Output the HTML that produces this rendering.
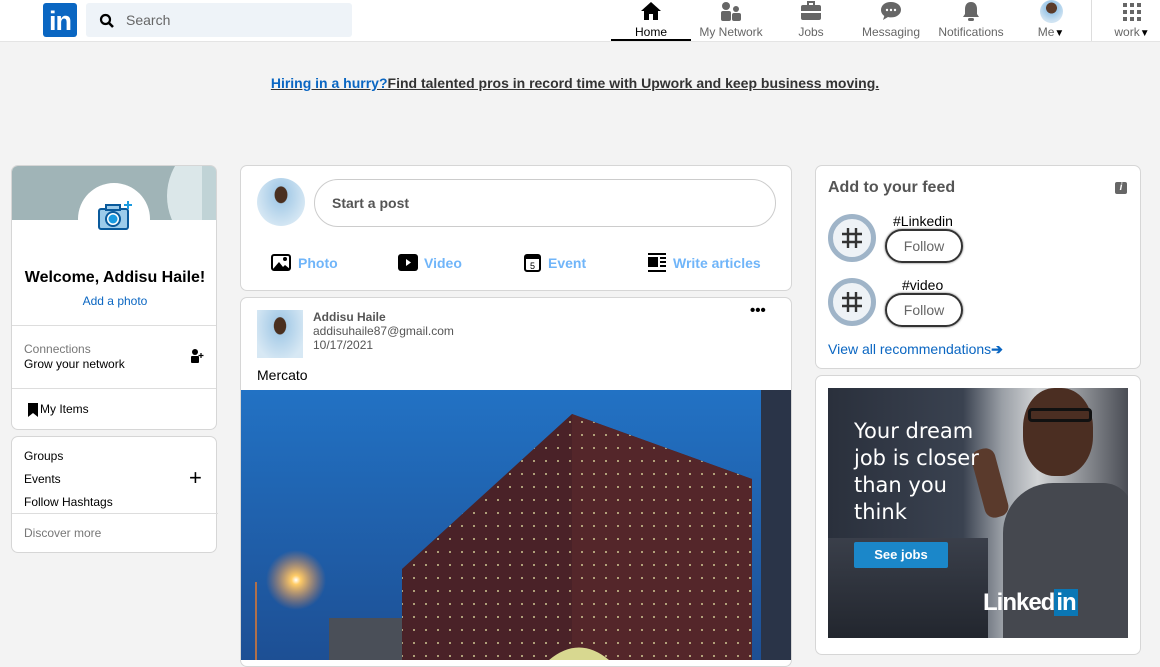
<!DOCTYPE html>
<html><head><meta charset="utf-8"><style>
*{box-sizing:border-box;margin:0;padding:0}
body{width:1160px;height:657px;overflow:hidden;background:#f3f3f3;font-family:"Liberation Sans",Arial,sans-serif;position:relative;color:#000}
.a{position:absolute}
.hdr{left:0;top:0;width:1160px;height:42px;background:#fff;border-bottom:1px solid #e4e4e4}
.nav{top:0;text-align:center;font-size:12px;color:#666;width:80px}
.nav svg{display:block;margin:1px auto 0}
.card{background:#fff;border:1px solid #d6d6d6;border-radius:7px}
.lnk{color:#0a66c2}
.act{font-size:14px;font-weight:bold;color:#70b5f9}
.follow{width:78px;height:34px;border:2px solid #333;border-radius:17px;font-size:14px;color:#666;text-align:center;line-height:30px;box-shadow:0 0 2px #666}
.hash{width:48px;height:48px;border-radius:50%;background:#eef2f6;border:5px solid #9fb4c8}
</style></head><body>
<div class="a hdr"></div>
<div class="a" style="left:43px;top:3px;width:34px;height:34px;background:#0a66c2;border-radius:3px;color:#fff;font-weight:bold;font-size:27px;line-height:36px;text-align:center;letter-spacing:-1px">in</div>
<div class="a" style="left:86px;top:3px;width:266px;height:34px;background:#eef3f8;border-radius:3px"></div>
<svg class="a" style="left:99px;top:13px" width="16" height="16" viewBox="0 0 16 16"><circle cx="6.5" cy="6.5" r="4.5" fill="none" stroke="#000" stroke-width="2.2"/><path d="M10 10l4 4" stroke="#000" stroke-width="2.6"/></svg>
<div class="a" style="left:126px;top:12px;font-size:14px;color:#666">Search</div>

<div class="a nav" style="left:611px;width:80px;color:#000"><svg width="22" height="20" viewBox="0 0 22 20"><path d="M11 1L1 10h3v9h5v-6h4v6h5v-9h3z" fill="#000"/></svg><div style="margin-top:4px">Home</div></div>
<div class="a" style="left:611px;top:39px;width:80px;height:2px;background:#000"></div>
<div class="a nav" style="left:691px"><svg width="22" height="20" viewBox="0 0 22 20"><circle cx="6" cy="5" r="4" fill="#666"/><rect x="1" y="10" width="10" height="10" rx="2" fill="#666"/><circle cx="16" cy="8" r="3" fill="#666"/><rect x="12" y="12" width="9" height="8" rx="2" fill="#666"/></svg><div style="margin-top:4px">My Network</div></div>
<div class="a nav" style="left:771px"><svg width="22" height="20" viewBox="0 0 22 20"><rect x="8" y="1" width="6" height="4" fill="none" stroke="#666" stroke-width="2"/><rect x="1" y="4" width="20" height="15" rx="2" fill="#666"/><rect x="1" y="10" width="20" height="2" fill="#fff"/></svg><div style="margin-top:4px">Jobs</div></div>
<div class="a nav" style="left:851px"><svg width="22" height="20" viewBox="0 0 22 20"><path d="M11 1C5 1 1 4.5 1 9c0 2.5 1.3 4.5 3.3 6L3 19l5-3c1 .3 2 .4 3 .4 6 0 10-3.5 10-7.7S17 1 11 1z" fill="#666"/><circle cx="7" cy="9" r="1.2" fill="#fff"/><circle cx="11" cy="9" r="1.2" fill="#fff"/><circle cx="15" cy="9" r="1.2" fill="#fff"/></svg><div style="margin-top:4px">Messaging</div></div>
<div class="a nav" style="left:931px"><svg width="22" height="20" viewBox="0 0 22 20"><path d="M11 1c-4 0-6 3-6 7v5l-2 3h16l-2-3V8c0-4-2-7-6-7z" fill="#666"/><rect x="8" y="17" width="6" height="3" rx="1.5" fill="#666"/></svg><div style="margin-top:4px">Notifications</div></div>
<div class="a" style="left:1040px;top:0;width:23px;height:23px;border-radius:50%;background:radial-gradient(circle at 50% 35%,#5a3b2a 0 28%,#9cc7e8 30%,#cfe3f2 70%)"></div>
<div class="a nav" style="left:1011px;top:25px;width:80px">Me<span style="font-size:10px;color:#000">▼</span></div>
<div class="a" style="left:1091px;top:0;width:1px;height:41px;background:#ddd"></div>
<svg class="a" style="left:1122px;top:2px" width="20" height="20" viewBox="0 0 20 20" fill="#666"><rect x="1" y="1" width="4" height="4"/><rect x="8" y="1" width="4" height="4"/><rect x="15" y="1" width="4" height="4"/><rect x="1" y="8" width="4" height="4"/><rect x="8" y="8" width="4" height="4"/><rect x="15" y="8" width="4" height="4"/><rect x="1" y="15" width="4" height="4"/><rect x="8" y="15" width="4" height="4"/><rect x="15" y="15" width="4" height="4"/></svg>
<div class="a nav" style="left:1102px;top:25px;width:60px">work<span style="font-size:10px;color:#000">▼</span></div>

<div class="a" style="left:-5px;top:75px;width:1160px;text-align:center;font-size:14px;font-weight:bold;text-decoration:underline;color:#333"><span class="lnk">Hiring in a hurry?</span>Find talented pros in record time with Upwork and keep business moving.</div>

<!-- left -->
<div class="a card" style="left:11px;top:165px;width:206px;height:265px;overflow:hidden">
<div style="height:54px;background:#a0b4b7;position:relative;overflow:hidden"><div class="a" style="left:155px;top:-30px;width:120px;height:120px;border-radius:50%;background:#dbe7e9"></div><div class="a" style="left:190px;top:0;width:20px;height:60px;background:#c0d3d6"></div></div>
<div style="position:absolute;left:66px;top:17px;width:72px;height:72px;border-radius:50%;background:#fff"></div>
<svg class="a" style="left:85px;top:34px" width="36" height="32" viewBox="0 0 36 32"><rect x="2" y="9" width="29" height="20" rx="2" fill="#9ccbea" stroke="#0a5a9c" stroke-width="2"/><rect x="9" y="5" width="14" height="5" fill="#9ccbea" stroke="#0a5a9c" stroke-width="2"/><circle cx="16" cy="19" r="7" fill="#fff" stroke="#0a5a9c" stroke-width="2"/><circle cx="16" cy="19" r="4.5" fill="#1a9ae0"/><path d="M31 1v8M27 5h8" stroke="#1a9ae0" stroke-width="2"/></svg>
<div class="a" style="left:0;top:103px;width:206px;text-align:center;font-size:16px;font-weight:bold">Welcome, Addisu Haile!</div>
<div class="a lnk" style="left:0;top:128px;width:206px;text-align:center;font-size:12px">Add a photo</div>
<div class="a" style="left:0;top:159px;width:206px;height:1px;background:#ddd"></div>
<div class="a" style="left:12px;top:176px;font-size:12px;color:#777">Connections</div>
<div class="a" style="left:12px;top:191px;font-size:12px">Grow your network</div>
<svg class="a" style="left:178px;top:183px" width="14" height="14" viewBox="0 0 14 14"><circle cx="5" cy="3" r="3"/><rect x="1" y="7" width="8" height="7" rx="1"/><path d="M11 4v5M8.5 6.5h5" stroke="#000" stroke-width="1.2"/></svg>
<div class="a" style="left:0;top:222px;width:206px;height:1px;background:#ddd"></div>
<svg class="a" style="left:16px;top:237px" width="10" height="14" viewBox="0 0 10 14"><path d="M0 0h10v14L5 10 0 14z"/></svg>
<div class="a" style="left:28px;top:236px;font-size:12px">My Items</div>
</div>
<div class="a card" style="left:11px;top:436px;width:206px;height:117px">
<div class="a" style="left:12px;top:12px;font-size:12px">Groups</div>
<div class="a" style="left:12px;top:35px;font-size:12px">Events</div>
<div class="a" style="left:177px;top:30px;font-size:22px;line-height:22px">+</div>
<div class="a" style="left:12px;top:58px;font-size:12px">Follow Hashtags</div>
<div class="a" style="left:0;top:76px;width:206px;height:1px;background:#ddd"></div>
<div class="a" style="left:12px;top:89px;font-size:12px;color:#777">Discover more</div>
</div>

<!-- center -->
<div class="a card" style="left:240px;top:165px;width:552px;height:126px">
<div class="a" style="left:16px;top:12px;width:48px;height:48px;border-radius:50%;background:radial-gradient(ellipse at 50% 35%,#4a3020 0 18%,#a9cde8 20%,#d7e8f4 75%)"></div>
<div class="a" style="left:73px;top:13px;width:462px;height:48px;border:1px solid #ccc;border-radius:24px;font-size:14px;font-weight:bold;color:#555;padding:15px 0 0 17px">Start a post</div>
<svg class="a" style="left:30px;top:88px" width="20" height="17" viewBox="0 0 20 17"><rect x="1" y="1" width="18" height="15" rx="2" fill="#fff" stroke="#000" stroke-width="2"/><path d="M2 15l6-7 4 5 2-2 5 4z"/><circle cx="14" cy="5" r="2"/></svg>
<div class="a act" style="left:57px;top:89px">Photo</div>
<svg class="a" style="left:157px;top:88px" width="20" height="17"><rect x="0" y="0" width="20" height="17" rx="3"/><path d="M8 5v7l5-3.5z" fill="#fff"/></svg>
<div class="a act" style="left:183px;top:89px">Video</div>
<svg class="a" style="left:283px;top:87px" width="17" height="19" viewBox="0 0 17 19"><rect x="1" y="2" width="15" height="16" rx="2" fill="#fff" stroke="#000" stroke-width="2"/><rect x="1" y="2" width="15" height="4"/><text x="8.5" y="16" font-size="9" text-anchor="middle" font-family="Liberation Sans">5</text></svg>
<div class="a act" style="left:307px;top:89px">Event</div>
<svg class="a" style="left:407px;top:87px" width="18" height="19" viewBox="0 0 18 19"><rect x="0" y="0" width="18" height="2"/><rect x="0" y="4" width="10" height="10"/><rect x="12" y="4" width="6" height="2"/><rect x="12" y="8" width="6" height="2"/><rect x="12" y="12" width="6" height="2"/><rect x="0" y="17" width="18" height="2"/></svg>
<div class="a act" style="left:432px;top:89px">Write articles</div>
</div>

<div class="a card" style="left:240px;top:297px;width:552px;height:370px;overflow:hidden">
<div class="a" style="left:16px;top:12px;width:46px;height:48px;background:radial-gradient(ellipse at 50% 33%,#4a3020 0 18%,#a9cde8 20%,#d7e8f4 80%)"></div>
<div class="a" style="left:72px;top:12px;font-size:12px;font-weight:bold;color:#555">Addisu Haile</div>
<div class="a" style="left:72px;top:26px;font-size:12px;color:#555">addisuhaile87@gmail.com</div>
<div class="a" style="left:72px;top:40px;font-size:12px;color:#555">10/17/2021</div>
<div class="a" style="left:509px;top:4px;font-size:15px;font-weight:bold;letter-spacing:0">•••</div>
<div class="a" style="left:16px;top:69px;font-size:14px">Mercato</div>
<svg class="a" style="left:0;top:92px" width="552" height="270" viewBox="0 0 552 270">
<defs><linearGradient id="sk" x1="0" y1="0" x2="0" y2="1"><stop offset="0" stop-color="#2272c4"/><stop offset="1" stop-color="#1d4f94"/></linearGradient><radialGradient id="gl"><stop offset="0" stop-color="#fff"/><stop offset=".15" stop-color="#ffcc66"/><stop offset="1" stop-color="#ff8844" stop-opacity="0"/></radialGradient><pattern id="dots" width="12" height="13" patternUnits="userSpaceOnUse"><rect x="4" y="5" width="2" height="2" fill="#d9d59a" opacity=".7"/></pattern></defs>
<rect width="552" height="270" fill="url(#sk)"/>
<polygon points="161,179 331,24 511,89 511,270 161,270" fill="#4a2228"/>
<polygon points="331,24 511,89 511,270 331,270" fill="#54262a"/>
<polygon points="161,179 331,24 511,89 511,270 161,270" fill="url(#dots)"/>
<rect x="520" y="0" width="32" height="270" fill="#2a3448"/>
<rect x="88" y="228" width="73" height="42" fill="#4a4f58"/>
<circle cx="55" cy="190" r="30" fill="url(#gl)"/>
<rect x="14" y="192" width="2" height="78" fill="#b0704a"/>
<path d="M308 270q30-25 60 0z" fill="#d8d890"/>
</svg>
</div>

<!-- right -->
<div class="a card" style="left:815px;top:165px;width:326px;height:204px">
<div class="a" style="left:12px;top:13px;font-size:16px;font-weight:bold;color:#555">Add to your feed</div>
<div class="a" style="left:299px;top:16px;width:12px;height:12px;background:#666;border-radius:2px;color:#fff;font-size:10px;font-weight:bold;font-style:italic;text-align:center;line-height:12px">i</div>
<div class="a hash" style="left:12px;top:48px"><svg width="38" height="38" viewBox="0 0 38 38"><path d="M15 9v20M23 9v20M9 15h20M9 23h20" stroke="#333" stroke-width="2.4"/></svg></div>
<div class="a" style="left:77px;top:47px;font-size:14px">#Linkedin</div>
<div class="a follow" style="left:69px;top:63px">Follow</div>
<div class="a hash" style="left:12px;top:112px"><svg width="38" height="38" viewBox="0 0 38 38"><path d="M15 9v20M23 9v20M9 15h20M9 23h20" stroke="#333" stroke-width="2.4"/></svg></div>
<div class="a" style="left:86px;top:111px;font-size:14px">#video</div>
<div class="a follow" style="left:69px;top:127px">Follow</div>
<div class="a lnk" style="left:12px;top:175px;font-size:14px">View all recommendations<b>➔</b></div>
</div>
<div class="a card" style="left:815px;top:375px;width:326px;height:280px;overflow:hidden">
<div class="a" style="left:12px;top:12px;width:300px;height:250px;overflow:hidden;background:linear-gradient(90deg,#2a303c 0%,#3a4250 45%,#9a9fa6 58%,#d2d4d6 70%,#8c8f94 85%,#4a4d55 100%)">
<div class="a" style="left:195px;top:0px;width:70px;height:88px;border-radius:45%;background:#4b2e22"></div>
<div class="a" style="left:200px;top:20px;width:64px;height:14px;border:3px solid #111;border-radius:4px"></div>
<div class="a" style="left:150px;top:60px;width:24px;height:70px;border-radius:10px;background:#5a3a2c;transform:rotate(-15deg)"></div>
<div class="a" style="left:175px;top:95px;width:130px;height:160px;background:#45484f;border-radius:50px 30px 0 0"></div>
<div class="a" style="left:0;top:150px;width:160px;height:100px;background:linear-gradient(180deg,#3a3f4a,#22262e)"></div>
</div>
<div class="a" style="left:38px;top:42px;font-size:21px;line-height:27px;color:#fff;font-family:'DejaVu Sans',sans-serif">Your dream<br>job is closer<br>than you<br>think</div>
<div class="a" style="left:38px;top:166px;width:94px;height:26px;background:#1b87c9;border-radius:2px;color:#fff;font-size:13px;font-weight:bold;text-align:center;line-height:26px">See jobs</div>
<div class="a" style="left:167px;top:213px;color:#fff;font-size:24px;font-weight:bold;letter-spacing:-1px">Linked<span style="background:#0a77b5;padding:0 2px">in</span></div>
</div>
</body></html>
